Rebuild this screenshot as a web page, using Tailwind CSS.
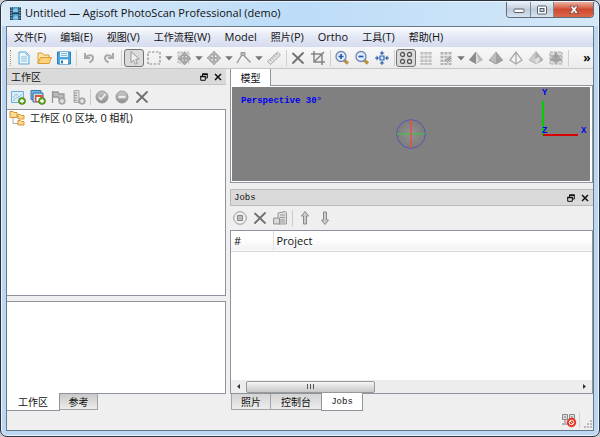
<!DOCTYPE html>
<html lang="zh-CN">
<head>
<meta charset="utf-8">
<title>Untitled — Agisoft PhotoScan Professional (demo)</title>
<script src="https://cdn.jsdelivr.net/npm/@tailwindcss/browser@4"></script>
</head>
<body class="h-screen overflow-hidden bg-[#c9cdd2] font-['Open_Sans','Noto_Sans_CJK_SC',sans-serif] text-[10px] leading-4 text-[#111]">
<svg class="absolute size-0" aria-hidden="true">
  <defs>
    <linearGradient id="gry" x1="0" y1="0" x2="0" y2="1"><stop offset="0" stop-color="#c9c9c9"/><stop offset="1" stop-color="#8d8d8d"/></linearGradient>
    <radialGradient id="ball"><stop offset="0" stop-color="#929292"/><stop offset="1" stop-color="#7c7c7c"/></radialGradient>
    <symbol id="x" viewBox="0 0 16 16"><path d="M3 3.500L13 13M13 3L3 13" stroke="#707070" stroke-width="1.800" stroke-linecap="round"/></symbol>
    <symbol id="plus" viewBox="0 0 8 8"><circle cx="4" cy="4" r="3.500" fill="#62a51d" stroke="#3f7a12" stroke-width=".6"/><path d="M4 2v4M2 4h4" stroke="#fff" stroke-width="1.300"/></symbol>
    <symbol id="gplus" viewBox="0 0 8 8"><circle cx="4" cy="4" r="3.300" fill="#b5b5b5" stroke="#8f8f8f" stroke-width=".7"/><path d="M4 2v4M2 4h4" stroke="#eee" stroke-width="1.200"/></symbol>
    <symbol id="float" viewBox="0 0 8 8"><path d="M2.500 3V1H7.300V5H5.500M.7 3.500H5.300V7.300H.7Z" fill="none" stroke="#111" stroke-width="1"/><path d="M2 1.200h5.800M.2 3.600h5.600" stroke="#111" stroke-width="1.500"/></symbol>
    <symbol id="close" viewBox="0 0 8 8"><path d="M1 1L7 7M7 1L1 7" stroke="#111" stroke-width="1.500"/></symbol>
  </defs>
</svg>
<div class="flex h-full flex-col rounded-[7px] border border-[#2c333c] bg-[#bdd6f2] px-[5px] pb-[5px] shadow-[inset_0_0_0_1px_#e9f4fe]">
  <header class="-mx-1 mt-px flex h-6 shrink-0 items-start rounded-t-md bg-linear-to-r from-[#dcebf8] via-[#bcdcf8] to-[#d5e8f7] pl-1">
    <svg class="mt-1 ml-[2px] size-[15px]" viewBox="0 0 15 15"><path d="M2 1h11v13H2z" fill="#223e58"/><path d="M4.500 1h6v5.500h-6zM4.500 8h6v6h-6z" fill="#4a9cc9"/><path d="M5 4l3-2 2 2v2H5zM5 12l3-3 2 2v2H5z" fill="#85c8e6"/><path d="M3.200 1v13M11.800 1v13" stroke="#c7d9e6" stroke-dasharray="1.300 1.300"/></svg>
    <h1 class="ml-[2px] flex-1 truncate pt-[3px] text-[11px] font-normal">Untitled — Agisoft PhotoScan Professional (demo)</h1>
    <div class="mr-1 flex h-4 overflow-hidden rounded-b-[4px] border border-t-0 border-[#606d7b]">
      <button aria-label="最小化" class="flex w-6 items-center justify-center border-r border-[#7b8997] bg-linear-to-b from-[#e9f1f8] via-[#bfccda] to-[#d6e3ef]"><svg class="size-3" viewBox="0 0 12 12"><rect x="1" y="5" width="10" height="3.500" rx="1" fill="#fff" stroke="#555e6a"/></svg></button>
      <button aria-label="最大化" class="flex w-[23px] items-center justify-center border-r border-[#7b8997] bg-linear-to-b from-[#e9f1f8] via-[#bfccda] to-[#d6e3ef]"><svg class="size-3" viewBox="0 0 12 12"><rect x="1.500" y="2" width="9" height="8" rx="1" fill="#fff" stroke="#555e6a"/><rect x="4" y="4.500" width="4" height="3" fill="#c5d1de" stroke="#555e6a"/></svg></button>
      <button aria-label="关闭" class="flex w-[39px] items-center justify-center bg-linear-to-b from-[#eab0a2] via-[#cf4a30] to-[#d9694c]"><svg class="size-3" viewBox="0 0 12 12"><path d="M2 2h2.700L6 3.800 7.300 2H10L7.700 5.600 10.300 9.500H7.500L6 7.400 4.500 9.500H1.700L4.300 5.600Z" fill="#fff" stroke="#5d3434" stroke-width=".7"/></svg></button>
    </div>
  </header>

  <div class="flex min-h-0 flex-1 flex-col border border-[#68788b] bg-[#efefef]">
    <nav class="flex h-5 shrink-0 items-center bg-linear-to-b from-[#fbfcfe] via-[#e3e8f5] to-[#d6dcef] [&>button]:px-[7px]">
      <button>文件<span class="text-[11px]">(F)</span></button>
      <button>编辑<span class="text-[11px]">(E)</span></button>
      <button>视图<span class="text-[11px]">(V)</span></button>
      <button>工作流程<span class="text-[11px]">(W)</span></button>
      <button><span class="text-[11px]">Model</span></button>
      <button>照片<span class="text-[11px]">(P)</span></button>
      <button><span class="text-[11px]">Ortho</span></button>
      <button>工具<span class="text-[11px]">(T)</span></button>
      <button>帮助<span class="text-[11px]">(H)</span></button>
    </nav>

    <div role="toolbar" class="flex h-[22px] shrink-0 items-center border-b border-[#c6c6c6] bg-linear-to-b from-[#f8f8f8] to-[#ececec] pl-[3px] [&>button]:flex [&>button]:h-[18px] [&>button]:shrink-0 [&>button]:items-center [&>button]:justify-center [&>hr]:mx-[2px] [&>hr]:h-4 [&>hr]:w-px [&>hr]:border-0 [&>hr]:bg-[#d0d0d0] [&_svg]:size-4 [&_svg]:fill-none">
      <i class="mr-[3px] h-4 w-px border-l border-dotted border-[#999]"></i>
      <button aria-label="新建" class="w-5"><svg viewBox="0 0 16 16"><path d="M3 2h7l3 3v9H3z" fill="#eaf6fd" stroke="#5ba4d2"/><path d="M10 2v3h3M5 7h6M5 9h6M5 11h6" stroke="#8cc3e4"/></svg></button>
      <button aria-label="打开" class="w-5"><svg viewBox="0 0 16 16"><path d="M2 13V3h4l1.500 2H13v3" fill="#fbe4a4" stroke="#dd9a35"/><path d="M2 13.500L4.500 7.500h11L13 13.500z" fill="#fad27c" stroke="#dd9a35"/></svg></button>
      <button aria-label="保存" class="w-5"><svg viewBox="0 0 16 16"><path d="M1.500 2h13v12h-13z" fill="#4da7de" stroke="#257fb9"/><path d="M4 2h8v5H4z" fill="#e6f4fc"/><path d="M5 3.500h6M5 5.500h6" stroke="#8cb9d6"/><path d="M4 9.500h8V14H4z" fill="#fff"/><path d="M6 10.500v3" stroke="#257fb9" stroke-width="2"/></svg></button>
      <hr class="ml-[2px]">
      <button aria-label="撤销" class="w-5"><svg viewBox="0 0 16 16"><path d="M4 3v5h5M4.500 7.500C7 4.500 12 4.500 12 8c0 2-1.500 3.500-3.500 4.500" stroke="#aaa" stroke-width="2"/></svg></button>
      <button aria-label="重做" class="w-5"><svg viewBox="0 0 16 16"><path d="M12 3v5H7M11.500 7.500C9 4.500 4 4.500 4 8c0 2 1.500 3.500 3.500 4.500" stroke="#aaa" stroke-width="2"/></svg></button>
      <hr>
      <button aria-label="选择" class="w-5 rounded-[3px] border border-[#747474] bg-[#dadada]"><svg viewBox="0 0 16 16"><path d="M5 1.500v11l2.700-2.300 1.700 4 2-.9-1.700-3.800 3.300-.4z" fill="#eee" stroke="#999"/></svg></button>
      <button aria-label="矩形选择" class="w-5"><svg viewBox="0 0 16 16"><path d="M2 2h12v12H2z" stroke="#8a8a8a" stroke-width="1.200" stroke-dasharray="2.500 1.500"/></svg></button>
      <button aria-label="选择菜单" class="w-[10px]"><svg viewBox="0 0 16 16"><path d="M2 5h12l-6 7z" fill="#777"/></svg></button>
      <button aria-label="移动区域" class="w-5"><svg viewBox="0 0 16 16"><path d="M2 2h11v11H2z" fill="#ddd" stroke="#bbb" stroke-dasharray="2 1"/><path d="M8.500 2l3 3.500h-6zM8.500 15l3-3.500h-6zM2 8.500l3.500-3v6zM15 8.500l-3.500-3v6z" fill="#aaa" stroke="#8f8f8f" stroke-width=".6"/><path d="M8.500 5v7M5 8.500h7" stroke="#a5a5a5" stroke-width="2"/></svg></button>
      <button aria-label="区域菜单" class="w-[10px]"><svg viewBox="0 0 16 16"><path d="M2 5h12l-6 7z" fill="#777"/></svg></button>
      <button aria-label="移动对象" class="w-5"><svg viewBox="0 0 16 16"><path d="M8 1l3.500 4h-7zM8 15l3.500-4h-7zM1 8l4-3.500v7zM15 8l-4-3.500v7z" fill="#b7b7b7" stroke="#999" stroke-width=".7"/><path d="M8 4v8M4 8h8" stroke="#aaa" stroke-width="2"/></svg></button>
      <button aria-label="对象菜单" class="w-[10px]"><svg viewBox="0 0 16 16"><path d="M2 5h12l-6 7z" fill="#777"/></svg></button>
      <button aria-label="绘制折线" class="w-5"><svg viewBox="0 0 16 16"><path d="M1 13L6.500 4l8 8.500" stroke="#999" stroke-width="1.400"/><path d="M5 2.500h4v3H5z" fill="#bbb" stroke="#999"/></svg></button>
      <button aria-label="绘制菜单" class="w-[10px]"><svg viewBox="0 0 16 16"><path d="M2 5h12l-6 7z" fill="#777"/></svg></button>
      <button aria-label="标尺" class="w-5"><svg viewBox="0 0 16 16"><path d="M1.500 11.500L11.500 2l3 3L4.500 14.500z" fill="#e2e2e2" stroke="#aaa"/><path d="M4 9.500l1.500 1.500M6 7.500L7.500 9M8 5.500L9.500 7M10 3.800l1.500 1.500" stroke="#999"/></svg></button>
      <hr class="!mr-px">
      <button aria-label="删除选择" class="w-5"><svg><use href="#x"/></svg></button>
      <button aria-label="裁剪" class="w-5"><svg viewBox="0 0 16 16"><path d="M4 1v11h11M1 4h11v11M5 11L14 2" stroke="#858585" stroke-width="1.500"/></svg></button>
      <hr class="!mr-px">
      <button aria-label="放大" class="w-5"><svg viewBox="0 0 16 16"><path d="M10 10l4 3.500" stroke="#bb903c" stroke-width="3"/><circle cx="7" cy="6.500" r="5" fill="#e3eefc" stroke="#7187b3" stroke-width="1.300"/><path d="M7 4v5M4.500 6.500h5" stroke="#2459b0" stroke-width="1.700"/></svg></button>
      <button aria-label="缩小" class="w-5"><svg viewBox="0 0 16 16"><path d="M10 10l4 3.500" stroke="#bb903c" stroke-width="3"/><circle cx="7" cy="6.500" r="5" fill="#e3eefc" stroke="#7187b3" stroke-width="1.300"/><path d="M4.500 6.500h5" stroke="#2459b0" stroke-width="1.700"/></svg></button>
      <button aria-label="重置视图" class="w-5"><svg viewBox="0 0 16 16"><path d="M6 6h4v4H6z" fill="#dcecff" stroke="#315fae" stroke-width="1.200"/><path d="M8 5L5.500 2.500h5zM8 11l-2.500 2.500h5zM5 8L2.500 5.500v5zM11 8l2.500-2.500v5z" fill="#315fae"/><path d="M8 1v3M8 12v3M1 8h3M12 8h3" stroke="#315fae"/></svg></button>
      <hr class="!mr-px">
      <button aria-label="点云" class="w-5 rounded-[3px] border border-[#747474] bg-[#dadada]"><svg viewBox="0 0 16 16"><g stroke="#555" stroke-width="1.300" fill="#f4f4f4"><circle cx="4.500" cy="4.500" r="2"/><circle cx="11.500" cy="4.500" r="2"/><circle cx="4.500" cy="11.500" r="2"/><circle cx="11.500" cy="11.500" r="2"/></g></svg></button>
      <button aria-label="密集点云" class="w-5"><svg viewBox="0 0 16 16"><path d="M4 2v13M8 2v13M12 2v13" stroke="#b0b0b0" stroke-width="3" stroke-dasharray="2.500 1.200"/><path d="M4 2.700v12M8 2.700v12M12 2.700v12" stroke="#eee" stroke-dasharray="1.100 2.600"/></svg></button>
      <button aria-label="密集点云分类" class="w-5"><svg viewBox="0 0 16 16"><path d="M4 2v13M8 2v13M12 2v13" stroke="#b2b2b2" stroke-width="3" stroke-dasharray="2.500 1.200"/><path d="M5 12l4-6 5 2-3 5z" fill="#ccc"/><path d="M7 11l5-4M9 12l4-4" stroke="#888"/></svg></button>
      <button aria-label="点云菜单" class="w-[10px]"><svg viewBox="0 0 16 16"><path d="M2 5h12l-6 7z" fill="#777"/></svg></button>
      <button aria-label="着色" class="w-5"><svg viewBox="0 0 16 16"><path d="M8 1.500L1 10l7 4 7-4z" fill="#bbb"/><path d="M8 1.500L1 10l7 4z" fill="#8d8d8d"/><path d="M8 1.500l3 9-3 3.500z" fill="#ddd"/></svg></button>
      <button aria-label="实体" class="w-5"><svg viewBox="0 0 16 16"><path d="M8 1.500L1 10l7 4 7-4z" fill="#a1a1a1"/><path d="M8 1.500L1 10l7 4z" fill="#bbb"/><path d="M1 10l7 4 7-4" stroke="#999"/></svg></button>
      <button aria-label="线框" class="w-5"><svg viewBox="0 0 16 16"><path d="M8 2L2 10l6 4 6-4zM8 2v12" fill="#f3f3f3" stroke="#aaa" stroke-width="1.300"/></svg></button>
      <button aria-label="纹理" class="w-5"><svg viewBox="0 0 16 16"><path d="M8 1.500L1 10l7 4 7-4z" fill="#ccc" stroke="#aaa" stroke-width=".7"/><path d="M8 1.500l7 8.500-4 2-4-3z" fill="#b0b0b0"/><path d="M7 9l4-2 1 3-4 4z" fill="#e2e2e2"/></svg></button>
      <button aria-label="瓦片模型" class="w-5"><svg viewBox="0 0 16 16"><path d="M2 2h12v12H2z" fill="#ddd" stroke="#aaa" stroke-dasharray="3 1"/><path d="M8 2L2 10l6 3 6-3z" fill="#aaa"/><path d="M2 6h12M2 10h12M8 2v12" stroke="#999"/></svg></button>
      <hr>
      <button aria-label="更多" class="ml-auto w-3 text-[12px] font-bold">»</button>
    </div>

    <main class="flex min-h-0 flex-1 gap-1">
      <section class="flex w-[219px] shrink-0 flex-col">
        <div class="flex h-4 shrink-0 items-center border-b border-[#c4c4c4] bg-[#dadada] pr-1 pl-1">
          <h2 class="flex-1">工作区</h2>
          <button aria-label="浮动工作区" class="mr-[6px]"><svg class="size-2"><use href="#float"/></svg></button>
          <button aria-label="关闭工作区"><svg class="size-2"><use href="#close"/></svg></button>
        </div>
        <div role="toolbar" class="flex h-6 shrink-0 items-center pl-px [&>button]:flex [&>button]:w-5 [&>button]:justify-center [&_svg]:size-4 [&_svg]:fill-none">
          <button aria-label="添加堆块"><svg viewBox="0 0 16 16"><path d="M1.500 2.500h12v11h-12z" fill="#d7edf9" stroke="#6faed4"/><path d="M3 9l3-4 3 3 3-3M3 12l4-4 3 3" stroke="#94c4e0"/><use href="#plus" x="8" y="8" width="8" height="8"/></svg></button>
          <button aria-label="添加照片"><svg viewBox="0 0 16 16"><path d="M1 1.500h10v9H1z" fill="#74b9e5" stroke="#3377ae"/><path d="M3 4h10v9H3z" fill="#b6ddf4" stroke="#2e6da3"/><path d="M5 6h8v7H5z" fill="#e05439"/><path d="M6.500 8h4v4h-4z" fill="#fff"/><use href="#plus" x="8" y="8" width="8" height="8"/></svg></button>
          <button aria-label="添加标记"><svg viewBox="0 0 16 16"><path d="M2.500 2v12M3 3h5l1 2h5v5H9L8 8H3z" fill="#bbb" stroke="#999" stroke-width="1.300"/><use href="#gplus" x="8" y="8" width="8" height="8"/></svg></button>
          <button aria-label="添加比例尺"><svg viewBox="0 0 16 16"><path d="M4 1.500h5v12H4z" fill="#ddd" stroke="#aaa"/><path d="M4 4h3M4 6.500h3M4 9h3M4 11.500h3" stroke="#999"/><use href="#gplus" x="8" y="8" width="8" height="8"/></svg></button>
          <hr class="mr-px ml-[2px] h-4 w-px border-0 bg-[#ccc]">
          <button aria-label="启用"><svg viewBox="0 0 16 16"><circle cx="8" cy="8" r="6" fill="url(#gry)" stroke="#999"/><path d="M5 8l2 2.500L11.500 5" stroke="#eee" stroke-width="1.700"/></svg></button>
          <button aria-label="禁用"><svg viewBox="0 0 16 16"><circle cx="8" cy="8" r="6" fill="url(#gry)" stroke="#999"/><path d="M4.500 8h7" stroke="#eee" stroke-width="2.500"/></svg></button>
          <button aria-label="移除"><svg><use href="#x"/></svg></button>
        </div>
        <ul class="min-h-0 flex-1 border border-l-0 border-[#8e949d] bg-white">
          <li class="flex items-center pl-[2px]">
            <svg class="mr-[5px] size-4" viewBox="0 0 16 16"><path d="M4 6v7.500h5M4 6.500h5" fill="none" stroke="#aaa"/><path d="M1 1.500h3l1 1h3v5H1zM9 4.500h2.500l1 1H15V9H9zM9 10.500h2.500l1 1H15V15H9z" fill="#fbdc94" stroke="#d8922b"/></svg>
            <span>工作区 <span class="text-[11px]">(0</span> 区块<span class="text-[11px]">, 0</span> 相机<span class="text-[11px]">)</span></span>
          </li>
        </ul>
        <div class="mt-[5px] h-[93px] shrink-0 border border-l-0 border-[#8e949d] bg-white"></div>
        <div role="tablist" class="flex h-[18px] shrink-0 items-start">
          <button role="tab" aria-selected="true" class="-mt-px h-[18px] w-[53px] border border-t-0 border-l-0 border-[#8e949d] bg-white">工作区</button>
          <button role="tab" aria-selected="false" class="h-4 w-[38px] border border-t-0 border-l-0 border-[#a0a5ab] bg-linear-to-b from-[#c9c9c9] to-[#ececec]">参考</button>
        </div>
      </section>

      <section class="flex min-w-0 flex-1 flex-col">
        <div role="tablist" class="flex h-4 shrink-0"><button role="tab" aria-selected="true" class="relative -mb-px w-[41px] border border-t-0 border-b-0 border-[#8e949d] bg-white">模型</button></div>
        <div class="h-[98px] shrink-0 border border-[#8e949d] bg-white p-px pr-[2px]">
          <div class="relative flex h-full items-center justify-center overflow-hidden bg-[#808080] font-['Liberation_Mono','DejaVu_Sans_Mono',monospace] text-[9px] font-bold text-[#0000f0]">
            <p class="absolute top-[6px] left-[9px]">Perspective 30°</p>
            <svg class="size-[30px]" viewBox="0 0 30 30"><circle cx="15" cy="15" r="14.300" fill="url(#ball)" stroke="#5656b8"/><path d="M1 15h28" stroke="#45c045" stroke-width="1.200"/><path d="M15 1v28" stroke="#e8503f" stroke-width="1.500"/></svg>
            <svg class="absolute top-0 right-0 h-[54px] w-[54px]" viewBox="0 0 54 54" font-size="9" fill="#0000f0"><path d="M7 14v35" stroke="#00d000" stroke-width="2"/><path d="M7 48h35" stroke="#d80000" stroke-width="2"/><text x="6" y="8">Y</text><text x="6" y="46">Z</text><text x="45" y="46">X</text></svg>
          </div>
        </div>
        <div class="mt-[6px] flex h-[17px] shrink-0 items-center border border-r-0 border-[#bababa] bg-[#dadada] pr-1 pl-[3px]">
          <h2 class="flex-1 font-['Liberation_Mono',monospace] text-[9px]">Jobs</h2>
          <button aria-label="浮动任务" class="mr-[6px]"><svg class="size-2"><use href="#float"/></svg></button>
          <button aria-label="关闭任务"><svg class="size-2"><use href="#close"/></svg></button>
        </div>
        <div role="toolbar" class="flex h-6 shrink-0 items-center [&>button]:flex [&>button]:w-5 [&>button]:justify-center [&_svg]:size-4 [&_svg]:fill-none">
          <button aria-label="停止"><svg viewBox="0 0 16 16"><circle cx="8" cy="8" r="6.300" fill="#eee" stroke="#999"/><path d="M5.500 5.500h5v5h-5z" fill="#bbb" stroke="#888"/></svg></button>
          <button aria-label="删除任务"><svg><use href="#x"/></svg></button>
          <button aria-label="清除任务"><svg viewBox="0 0 16 16"><path d="M6 3l7-1.500 1.500 1V14H6z" fill="#ddd" stroke="#999"/><path d="M8 5h5M8 7.500h5M8 10h5M8 12h5" stroke="#999"/><path d="M1.500 8h6v6h-6z" fill="#ccc" stroke="#999"/><circle cx="4.500" cy="11" r="1.500" stroke="#eee"/></svg></button>
          <hr class="mx-[2px] h-4 w-px border-0 bg-[#ccc]">
          <button aria-label="上移"><svg viewBox="0 0 16 16"><path d="M8 1.500L11.500 6H9.500v8h-3V6h-2z" fill="#ccc" stroke="#888"/></svg></button>
          <button aria-label="下移"><svg viewBox="0 0 16 16"><path d="M8 14.500L11.500 10H9.500V2h-3v8h-2z" fill="#ccc" stroke="#888"/></svg></button>
        </div>
        <div class="flex min-h-0 flex-1 flex-col border border-[#8e949d] bg-white">
          <table class="w-full table-fixed text-left text-[11px]">
            <thead><tr class="h-5 border-b border-[#d5d5d5] bg-linear-to-b from-white from-40% to-[#f1f2f4]"><th class="w-[42px] border-r border-[#e0e2e5] px-[3px] font-normal">#</th><th class="px-[3px] font-normal">Project</th></tr></thead>
          </table>
          <div class="mt-auto flex h-[13px] shrink-0 items-center bg-[#ededed]">
            <button aria-label="向左滚动" class="flex w-[15px] justify-center"><svg class="size-[5px]" viewBox="0 0 5 5"><path d="M4 0v5L1 2.500z" fill="#333"/></svg></button>
            <div class="flex h-3 w-[129px] items-center justify-center gap-px rounded-[2px] border border-[#999] bg-linear-to-b from-[#f5f5f5] via-[#dedede] to-[#c8c8c8]"><i class="mr-px h-[5px] w-px bg-[#555]"></i><i class="mr-px h-[5px] w-px bg-[#555]"></i><i class="h-[5px] w-px bg-[#555]"></i></div>
            <button aria-label="向右滚动" class="ml-auto flex w-[15px] justify-center"><svg class="size-[5px]" viewBox="0 0 5 5"><path d="M1 0v5l3-2.500z" fill="#333"/></svg></button>
          </div>
        </div>
        <div role="tablist" class="flex h-[18px] shrink-0 items-start pl-px">
          <button role="tab" aria-selected="false" class="h-4 w-10 border border-t-0 border-[#a0a5ab] bg-linear-to-b from-[#d5d5d5] to-[#ececec]">照片</button>
          <button role="tab" aria-selected="false" class="h-4 w-[50px] border-b border-[#a0a5ab] bg-linear-to-b from-[#d5d5d5] to-[#ececec]">控制台</button>
          <button role="tab" aria-selected="true" class="-mt-px h-[18px] w-[42px] border border-t-0 border-[#8e949d] bg-white font-['Liberation_Mono',monospace] text-[9px]">Jobs</button>
        </div>
      </section>
    </main>

    <footer class="flex h-[18px] shrink-0 items-start justify-end pr-px">
      <svg class="mr-[2px] size-4" viewBox="0 0 16 16" role="img" aria-label="网络已断开"><path d="M1.500 2.500h5v5h-5zM8.500 2.500h5v5h-5z" fill="#ddd" stroke="#888"/><path d="M3 5h2M10 5h2M4 8v3M1 12h8" stroke="#777"/><circle cx="10.500" cy="10.500" r="4.700" fill="#e43623"/><circle cx="10.500" cy="10.500" r="2.300" fill="none" stroke="#fff" stroke-width=".9"/><path d="M9 9l3 3" stroke="#fff" stroke-width=".9"/></svg>
      <hr class="mr-[4px] h-4 w-px border-0 bg-[#d5d5d5]">
      <svg class="mt-2 size-2" viewBox="0 0 8 8"><path d="M6 0h2v2H6zM3 3h2v2H3zM6 3h2v2H6zM0 6h2v2H0zM3 6h2v2H3zM6 6h2v2H6z" fill="#bbb"/></svg>
    </footer>
  </div>
</div>
</body>
</html>
